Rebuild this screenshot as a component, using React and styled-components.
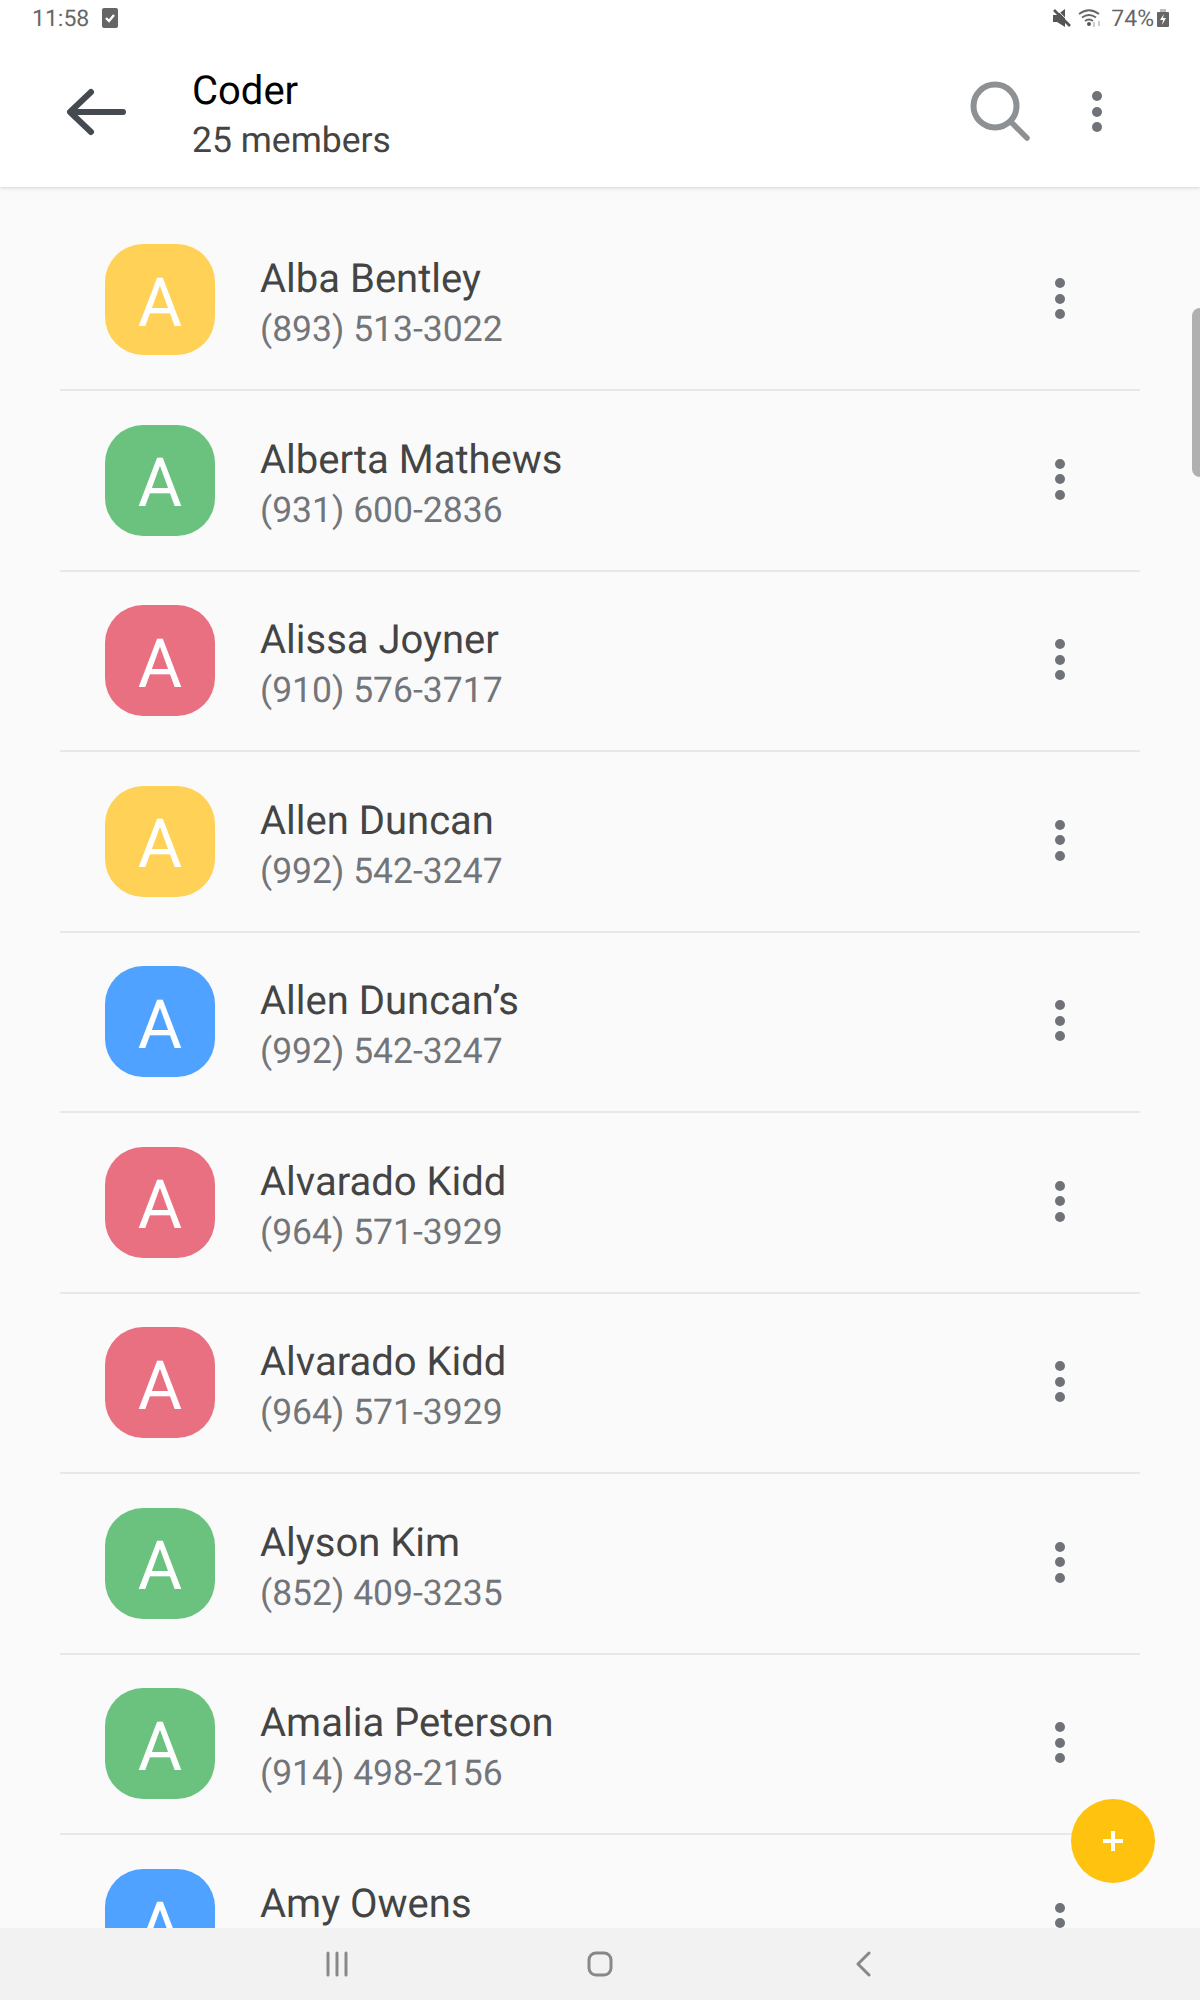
import styled, { createGlobalStyle } from 'styled-components'

const GlobalStyle = createGlobalStyle`
  * {
    box-sizing: border-box;
  }

  body {
    margin: 0;
    font-family: Roboto, "Noto Sans", sans-serif;
    text-rendering: geometricPrecision;
    background: #fafafa;
  }
`

const Page = styled.div`
  position: relative;
  display: flex;
  flex-direction: column;
  width: 1200px;
  height: 2000px;
  overflow: hidden;
  background: #fafafa;
`

const Header = styled.header`
  position: relative;
  z-index: 2;
  flex: none;
  height: 187px;
  background: #fff;
  box-shadow: 0 1px 4px rgba(0, 0, 0, 0.16);
`

const StatusBar = styled.div`
  display: flex;
  align-items: center;
  height: 36px;
  padding: 0 31px 0 32px;
  color: #666;
  font-size: 23px;
`

const StatusTime = styled.span`
  margin-right: 13px;
`

const StatusRight = styled.div`
  display: flex;
  align-items: center;
  margin-left: auto;
`

const WifiIcon = styled.svg`
  margin-left: 7px;
`

const Percent = styled.span`
  margin: 0 3px 0 8px;
`

const Toolbar = styled.div`
  display: flex;
  align-items: center;
  height: 151px;
  padding-left: 64px;
`

const BackButton = styled.svg`
  flex: none;
  width: 64px;
  height: 50px;
  margin-right: 64px;
`

const TitleBlock = styled.div`
  display: flex;
  flex-direction: column;
  flex: 1;
  margin-top: 7px;
`

const Title = styled.div`
  color: #000;
  font-size: 40px;
  line-height: 48px;
`

const Subtitle = styled.div`
  margin-top: 1px;
  color: #444;
  font-size: 35.5px;
  line-height: 48px;
`

const SearchIcon = styled.svg`
  flex: none;
  width: 62px;
  height: 62px;
  margin-right: 60px;
`

const Dots = styled.div`
  flex: none;
  display: flex;
  flex-direction: column;
  gap: 5.5px;
  width: 10px;
`

const Dot = styled.i`
  display: block;
  width: 10px;
  height: 10px;
  border-radius: 50%;
  background: #6f7276;
`

const HeaderDots = styled(Dots)`
  margin: 0 98px 0 0;
`

const List = styled.ul`
  flex: 1;
  min-height: 0;
  margin: 0;
  padding: 23.5px 60px 0;
  overflow: hidden;
  list-style: none;
`

const Row = styled.li`
  display: flex;
  align-items: center;
  height: 180.5px;
  padding: 0 75px 2px 45px;
  border-bottom: 2px solid #e8e8e8;
`

const Avatar = styled.div`
  flex: none;
  display: flex;
  align-items: center;
  justify-content: center;
  width: 110px;
  height: 111px;
  margin: 2px 45px 0 0;
  padding-top: 6px;
  border-radius: 38px;
  background: ${props => props.$color};
  color: #fff;
  font-size: 68px;
  font-weight: 400;
`

const RowText = styled.div`
  flex: 1;
  display: flex;
  flex-direction: column;
  margin-top: 11px;
`

const Name = styled.div`
  color: #444;
  font-size: 40px;
  line-height: 48px;
`

const Phone = styled.div`
  margin-top: 2px;
  color: #72757a;
  font-size: 35.5px;
  line-height: 48px;
`

const ScrollHandle = styled.div`
  position: absolute;
  top: 308px;
  right: 0;
  width: 8px;
  height: 169px;
  border-radius: 8px 0 0 8px;
  background: #b0b0b0;
`

const Fab = styled.button`
  position: absolute;
  top: 1799px;
  left: 1071px;
  display: flex;
  align-items: center;
  justify-content: center;
  width: 84px;
  height: 84px;
  padding: 0;
  border: none;
  border-radius: 50%;
  background: #ffc20e;
`

const NavBar = styled.nav`
  position: relative;
  z-index: 1;
  flex: none;
  display: grid;
  grid-template-columns: repeat(3, 263.5px);
  justify-content: center;
  align-items: center;
  justify-items: center;
  height: 72px;
  background: #f2f2f2;
`

const NavIcon = styled.svg`
  width: 30px;
  height: 26px;
  fill: none;
  stroke: #888;
  stroke-width: 3;
`

const members = [
  { name: 'Alba Bentley', phone: '(893) 513-3022', color: '#ffd257' },
  { name: 'Alberta Mathews', phone: '(931) 600-2836', color: '#6bc27f' },
  { name: 'Alissa Joyner', phone: '(910) 576-3717', color: '#e87080' },
  { name: 'Allen Duncan', phone: '(992) 542-3247', color: '#ffd257' },
  { name: 'Allen Duncan’s', phone: '(992) 542-3247', color: '#4fa2ff' },
  { name: 'Alvarado Kidd', phone: '(964) 571-3929', color: '#e87080' },
  { name: 'Alvarado Kidd', phone: '(964) 571-3929', color: '#e87080' },
  { name: 'Alyson Kim', phone: '(852) 409-3235', color: '#6bc27f' },
  { name: 'Amalia Peterson', phone: '(914) 498-2156', color: '#6bc27f' },
  { name: 'Amy Owens', phone: '(917) 482-3310', color: '#4fa2ff' },
]

function Kebab({ as: Wrapper = Dots }) {
  return (
    <Wrapper>
      <Dot />
      <Dot />
      <Dot />
    </Wrapper>
  )
}

function StatusBarRow() {
  return (
    <StatusBar>
      <StatusTime>11:58</StatusTime>
      <svg width="16" height="20" viewBox="0 0 16 20">
        <rect width="16" height="20" rx="2" fill="#666" />
        <path d="M4 10l3 3 5-6" fill="none" stroke="#fff" strokeWidth="2.4" />
      </svg>
      <StatusRight>
        <svg width="18" height="18" viewBox="0 0 18 18">
          <path d="M0 6h4l8-6v18l-8-5H0z" fill="#555" />
          <path d="M1 1l16 16" stroke="#555" strokeWidth="2.6" />
          <path d="M1 1l16 16" stroke="#fff" strokeWidth="1" transform="translate(1.6 -1.6)" />
        </svg>
        <WifiIcon width="25" height="20" viewBox="0 0 25 20">
          <path d="M1 6q10-7.500 20 0M4 9.500q7-5 14 0M7 13q4-3 8 0" fill="none" stroke="#666" strokeWidth="1.8" />
          <circle cx="11" cy="16" r="2" fill="#555" />
          <path d="M16 14v5M21 18v-5" stroke="#bbb" strokeWidth="1.500" />
        </WifiIcon>
        <Percent>74%</Percent>
        <svg width="12" height="18" viewBox="0 0 12 18">
          <rect x="3" width="6" height="3" fill="#bbb" />
          <rect y="3" width="12" height="15" rx="1" fill="#666" />
          <path d="M7 5L3 11h3l-1 5 4-7H6z" fill="#fff" />
        </svg>
      </StatusRight>
    </StatusBar>
  )
}

function App() {
  return (
    <Page>
      <GlobalStyle />
      <Header>
        <StatusBarRow />
        <Toolbar>
          <BackButton viewBox="0 0 64 50">
            <path d="M59 25H7M27 5L6 25l21 20" fill="none" stroke="#454a50" strokeWidth="6" strokeLinecap="round" strokeLinejoin="round" />
          </BackButton>
          <TitleBlock>
            <Title>Coder</Title>
            <Subtitle>25 members</Subtitle>
          </TitleBlock>
          <SearchIcon viewBox="0 0 62 62">
            <circle cx="25" cy="25" r="21.500" fill="none" stroke="#8e9194" strokeWidth="6" />
            <path d="M41 41l16 16" stroke="#8e9194" strokeWidth="5.500" strokeLinecap="round" />
          </SearchIcon>
          <Kebab as={HeaderDots} />
        </Toolbar>
      </Header>
      <List>
        {members.map((member, i) => (
          <Row key={i}>
            <Avatar $color={member.color}>A</Avatar>
            <RowText>
              <Name>{member.name}</Name>
              <Phone>{member.phone}</Phone>
            </RowText>
            <Kebab />
          </Row>
        ))}
      </List>
      <ScrollHandle />
      <Fab aria-label="Add member">
        <svg width="20" height="20" viewBox="0 0 20 20">
          <path d="M10 0v20M0 10h20" stroke="#fff" strokeWidth="4" />
        </svg>
      </Fab>
      <NavBar>
        <NavIcon viewBox="0 0 30 26">
          <path d="M6 2v22M15 2v22M24 2v22" strokeLinecap="round" />
        </NavIcon>
        <NavIcon viewBox="0 0 30 26">
          <rect x="4" y="2" width="22" height="22" rx="7" />
        </NavIcon>
        <NavIcon viewBox="0 0 30 26">
          <path d="M20 2L9 13l11 11" strokeLinecap="round" strokeLinejoin="round" />
        </NavIcon>
      </NavBar>
    </Page>
  )
}

export default App
